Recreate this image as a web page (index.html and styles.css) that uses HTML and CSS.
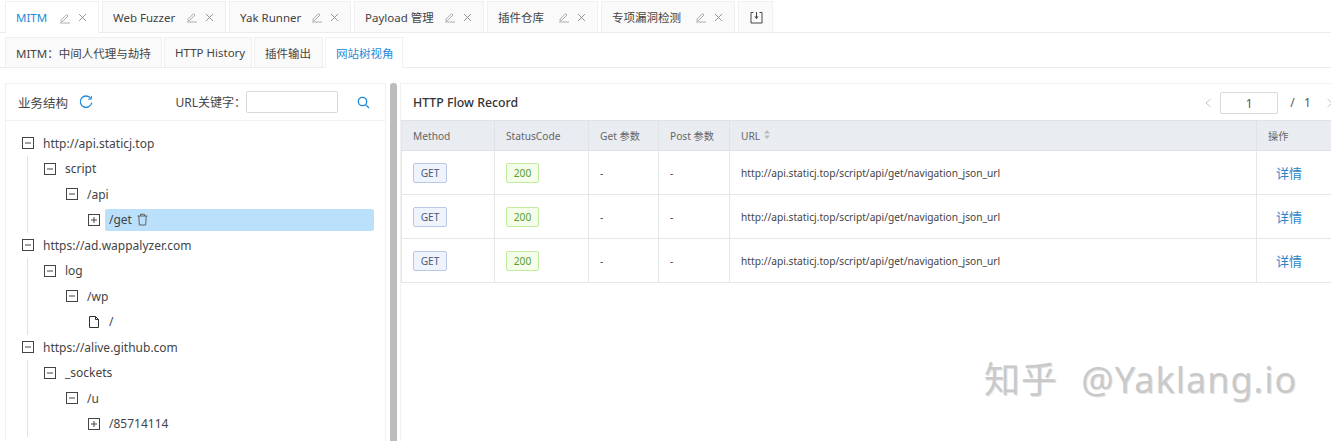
FILE: index.html
```html
<!DOCTYPE html>
<html lang="en">
<head>
  <meta charset="UTF-8" />
  <title>Yakit MITM</title>
  <link rel="stylesheet" href="styles.css">
</head>
<body>
  <svg class="defs" width="0" height="0">
    <symbol id="i-edit" viewBox="0 0 12 12"><path d="M2 8.2 7.6 2.6l1.4 1.4-5.6 5.6H2zM1 11h10" fill="none" stroke="currentColor" stroke-width=".8"/></symbol>
    <symbol id="i-close" viewBox="0 0 10 10"><path d="M1.2 1.2l7.6 7.6M8.8 1.2 1.2 8.8" fill="none" stroke="currentColor" stroke-width="1"/></symbol>
    <symbol id="i-minus" viewBox="0 0 12 12"><rect x=".5" y=".5" width="11" height="11" fill="#fff" stroke="currentColor"/><path d="M3 6h6" stroke="currentColor"/></symbol>
    <symbol id="i-plus" viewBox="0 0 12 12"><rect x=".5" y=".5" width="11" height="11" fill="#fff" stroke="currentColor"/><path d="M3 6h6M6 3v6" stroke="currentColor"/></symbol>
  </svg>

  <!-- Top tabs -->
  <div class="tabs top-tabs">
    <div class="tab active" style="width:94px"><span class="tab-name">MITM</span><svg class="tab-edit"><use href="#i-edit"/></svg><svg class="tab-close"><use href="#i-close"/></svg></div>
    <div class="tab" style="width:124px"><span class="tab-name">Web Fuzzer</span><svg class="tab-edit"><use href="#i-edit"/></svg><svg class="tab-close"><use href="#i-close"/></svg></div>
    <div class="tab" style="width:122px"><span class="tab-name">Yak Runner</span><svg class="tab-edit"><use href="#i-edit"/></svg><svg class="tab-close"><use href="#i-close"/></svg></div>
    <div class="tab" style="width:130px"><span class="tab-name">Payload 管理</span><svg class="tab-edit"><use href="#i-edit"/></svg><svg class="tab-close"><use href="#i-close"/></svg></div>
    <div class="tab" style="width:111px"><span class="tab-name">插件仓库</span><svg class="tab-edit"><use href="#i-edit"/></svg><svg class="tab-close"><use href="#i-close"/></svg></div>
    <div class="tab" style="width:134px"><span class="tab-name">专项漏洞检测</span><svg class="tab-edit"><use href="#i-edit"/></svg><svg class="tab-close"><use href="#i-close"/></svg></div>
    <div class="tab tab-add">
      <svg width="13" height="13" viewBox="0 0 13 13" fill="none" stroke="#444"><path d="M3.5 1.5H1v10.5h11V1.5H9.500M6.500 1v6.500" /><path d="M4.300 5.500h4.400L6.500 8z" fill="#444" stroke="none"/></svg>
    </div>
  </div>

  <!-- Sub tabs -->
  <div class="tabs sub-tabs">
    <div class="tab" style="width:157px">MITM：中间人代理与劫持</div>
    <div class="tab" style="width:88px">HTTP History</div>
    <div class="tab" style="width:69px">插件输出</div>
    <div class="tab active" style="width:78px">网站树视角</div>
  </div>

  <div class="main">
    <!-- Website tree -->
    <div class="panel left-panel">
      <div class="panel-head">
        <span class="panel-title">业务结构</span>
        <svg class="refresh" width="14" height="14" viewBox="0 0 14 14" fill="none" stroke="#1f8ad8" stroke-width="1.300"><path d="M11.700 3.400A5.700 5.700 0 1 0 12.700 7.500"/><path d="M12.300 1v3.200H9.100" stroke-width="1"/></svg>
        <label class="search-label">URL关键字：</label>
        <input class="search-input" type="text">
        <svg class="search-icon" width="13" height="13" viewBox="0 0 13 13" fill="none" stroke="#1f8ad8" stroke-width="1.300"><circle cx="5.500" cy="5.500" r="4.200"/><path d="M8.600 8.600 12 12"/></svg>
      </div>
      <div class="tree">
        <div class="node"><svg class="box"><use href="#i-minus"/></svg><span>http://api.staticj.top</span></div>
        <div class="children">
          <div class="node"><svg class="box"><use href="#i-minus"/></svg><span>script</span></div>
          <div class="sub">
            <div class="node"><svg class="box"><use href="#i-minus"/></svg><span>/api</span></div>
            <div class="sub">
              <div class="node"><svg class="box"><use href="#i-plus"/></svg>
                <span class="selected">/get
                  <svg class="trash" width="13" height="13" viewBox="0 0 13 13" fill="none" stroke="#555" stroke-width=".9"><path d="M1.500 3h10M4.500 3V1.300h4V3M2.800 3l.5 9h6.400l.5-9"/></svg>
                </span>
              </div>
            </div>
          </div>
        </div>
        <div class="node"><svg class="box"><use href="#i-minus"/></svg><span>https://ad.wappalyzer.com</span></div>
        <div class="children">
          <div class="node"><svg class="box"><use href="#i-minus"/></svg><span>log</span></div>
          <div class="sub">
            <div class="node"><svg class="box"><use href="#i-minus"/></svg><span>/wp</span></div>
            <div class="sub">
              <div class="node"><svg class="box" viewBox="0 0 12 12" fill="none" stroke="#333"><path d="M1.500.5h6l3 3v8h-9zM7.500.5v3h3"/></svg><span>/</span></div>
            </div>
          </div>
        </div>
        <div class="node"><svg class="box"><use href="#i-minus"/></svg><span>https://alive.github.com</span></div>
        <div class="children">
          <div class="node"><svg class="box"><use href="#i-minus"/></svg><span>_sockets</span></div>
          <div class="sub">
            <div class="node"><svg class="box"><use href="#i-minus"/></svg><span>/u</span></div>
            <div class="sub">
              <div class="node"><svg class="box"><use href="#i-plus"/></svg><span>/85714114</span></div>
            </div>
          </div>
        </div>
      </div>
    </div>

    <div class="splitter"></div>

    <!-- Flow table -->
    <div class="panel right-panel">
      <div class="panel-head right-head">
        <span class="flow-title">HTTP Flow Record</span>
        <div class="pager">
          <svg width="8" height="10" viewBox="0 0 8 10" fill="none" stroke="#c4c4c4"><path d="M6.500 1 2 5l4.500 4"/></svg>
          <div class="page-input">1</div>
          <span class="page-total">/&nbsp;&nbsp;&nbsp;1</span>
          <svg width="8" height="10" viewBox="0 0 8 10" fill="none" stroke="#c4c4c4"><path d="M1.500 1 6 5 1.500 9"/></svg>
        </div>
      </div>
      <table class="flow-table">
        <colgroup>
          <col style="width:93px"><col style="width:94px"><col style="width:70px"><col style="width:71px"><col style="width:527px"><col>
        </colgroup>
        <thead>
          <tr>
            <th>Method</th><th>StatusCode</th><th>Get 参数</th><th>Post 参数</th>
            <th>URL <svg width="8" height="11" viewBox="0 0 8 11" fill="#bbb"><path d="M4 1l3 3.500H1zM4 10 1 6.500h6z"/></svg></th>
            <th>操作</th>
          </tr>
        </thead>
        <tbody>
          <tr>
            <td><span class="tag tag-get">GET</span></td><td><span class="tag tag-ok">200</span></td><td>-</td><td>-</td>
            <td>http://api.staticj.top/script/api/get/navigation_json_url</td><td class="op"><a>详情</a></td>
          </tr>
          <tr>
            <td><span class="tag tag-get">GET</span></td><td><span class="tag tag-ok">200</span></td><td>-</td><td>-</td>
            <td>http://api.staticj.top/script/api/get/navigation_json_url</td><td class="op"><a>详情</a></td>
          </tr>
          <tr>
            <td><span class="tag tag-get">GET</span></td><td><span class="tag tag-ok">200</span></td><td>-</td><td>-</td>
            <td>http://api.staticj.top/script/api/get/navigation_json_url</td><td class="op"><a>详情</a></td>
          </tr>
        </tbody>
      </table>
    </div>
  </div>

  <div class="watermark">知乎 @Yaklang.io</div>
</body>
</html>
```

FILE: styles.css
```css
html, body {
  height: 100%;
}
body {
  margin: 0;
  width: 1331px;
  height: 441px;
  overflow: hidden;
  position: relative;
  background: #fff;
  color: #333;
  font-family: "Noto Sans", "Noto Sans CJK SC", sans-serif;
  font-size: 12px;
}
.defs {
  position: absolute;
}
/* Tabs */
.tabs {
  display: flex;
  gap: 3px;
  padding-left: 5px;
  border-bottom: 1px solid #ececec;
  box-sizing: border-box;
  font-size: 11.500px;
}
.top-tabs {
  height: 33px;
  padding-top: 1px;
}
.sub-tabs {
  height: 35px;
  padding-top: 4px;
  gap: 2px;
}
.tab {
  display: flex;
  align-items: center;
  box-sizing: border-box;
  padding-left: 10px;
  background: #fafafa;
  border: 1px solid #f0f0f0;
  border-bottom: none;
  color: #444;
  white-space: nowrap;
}
.tab.active {
  background: #fff;
  color: #1f8ad8;
  margin-bottom: -1px;
}
.tab-name {
  flex: 1;
}
.tab-edit {
  width: 12px;
  height: 12px;
  color: #999;
  margin-right: 7px;
}
.tab-close {
  width: 9px;
  height: 9px;
  color: #888;
  margin-right: 11px;
}
.tab-add {
  width: 35px;
  padding-left: 11px;
}
/* Main area */
.main {
  display: flex;
  margin-top: 15px;
  padding-left: 5px;
  height: 358px;
}
.panel {
  box-sizing: border-box;
  border: 1px solid #f0f0f0;
  border-bottom: none;
  background: #fff;
}
.left-panel {
  width: 381px;
  flex: none;
}
.splitter {
  width: 7px;
  flex: none;
  margin: 0 4px 0 4px;
  background: #bcbcbc;
  border-radius: 3px 3px 0 0;
}
.right-panel {
  width: 945px;
  flex: none;
  margin-left: -1px;
}
.panel-head {
  display: flex;
  align-items: center;
  height: 37px;
  box-sizing: border-box;
  border-bottom: 1px solid #f0f0f0;
  padding-left: 12px;
}
.panel-title {
  font-size: 12.500px;
  color: #444;
}
.refresh {
  margin-left: 11px;
}
.search-label {
  margin-left: auto;
  color: #444;
}
.search-input {
  width: 92px;
  height: 22px;
  box-sizing: border-box;
  border: 1px solid #d9d9d9;
  border-radius: 2px;
  margin-right: 19px;
  padding: 0;
}
.search-icon {
  margin-right: 15px;
}
/* Tree */
.tree {
  padding: 9.500px 0 0 16px;
}
.node {
  display: flex;
  align-items: center;
  height: 25.500px;
  white-space: nowrap;
  color: #444;
}
.box {
  width: 12px;
  height: 12px;
  flex: none;
  color: #444;
  margin-right: 9px;
}
.children {
  margin-left: 5px;
  padding-left: 16px;
  border-left: 1px solid #e2e2e2;
}
.sub {
  padding-left: 22px;
}
.selected {
  display: flex;
  align-items: center;
  gap: 4px;
  width: 269px;
  height: 22px;
  margin-left: -4px;
  padding-left: 4px;
  background: #bae0fb;
  border-radius: 2px;
  box-sizing: border-box;
}
/* Flow table */
.right-head {
  height: 36px;
  border-bottom: none;
  padding-left: 12px;
  padding-top: 1px;
}
.flow-title {
  font-size: 12.300px;
  font-weight: 500;
  color: #333;
}
.pager {
  display: flex;
  align-items: center;
  margin-left: 686px;
  color: #555;
}
.page-input {
  width: 58px;
  height: 22px;
  box-sizing: border-box;
  border: 1px solid #d9d9d9;
  border-radius: 2px;
  text-align: center;
  line-height: 21px;
  margin: 0 12px 0 8px;
}
.page-total {
  margin-right: 15px;
}
.flow-table {
  border-collapse: collapse;
  table-layout: fixed;
  width: 930px;
  font-size: 10.200px;
  color: #444;
}
.flow-table th {
  height: 30px;
  background: #e9ecf1;
  font-weight: 400;
  text-align: left;
  color: #666;
  padding: 0 0 0 11px;
  border: 1px solid #dfe2e7;
  border-width: 1px 1px 1px 0;
  box-sizing: border-box;
}
.flow-table td {
  height: 44px;
  padding: 0 0 0 11px;
  border-right: 1px solid #e6e6e6;
  border-bottom: 1px solid #e6e6e6;
  box-sizing: border-box;
}
.flow-table th:first-child, .flow-table td:first-child {
  border-left: 1px solid #e6e6e6;
}
.flow-table th:last-child, .flow-table td:last-child {
  border-right: none;
}
.tag {
  display: inline-block;
  height: 20px;
  line-height: 18px;
  box-sizing: border-box;
  border-radius: 2px;
  border: 1px solid;
  text-align: center;
}
.tag-get {
  width: 34px;
  background: #eef3fc;
  border-color: #b9c8e4;
  color: #4a5a7a;
}
.tag-ok {
  width: 33px;
  background: #f4fcea;
  border-color: #c3eb9f;
  color: #5a9e2a;
}
.op {
  padding-left: 19px !important;
}
.op a {
  color: #2a85c9;
  font-size: 13px;
}
/* Watermark over the page */
.watermark {
  position: absolute;
  left: 984px;
  top: 354px;
  font-size: 36px;
  line-height: 52px;
  white-space: nowrap;
  color: #c9c9c9;
  letter-spacing: 1px;
  word-spacing: 13px;
  text-shadow: 1px 1px 0 #e4e4e4;
}
```
